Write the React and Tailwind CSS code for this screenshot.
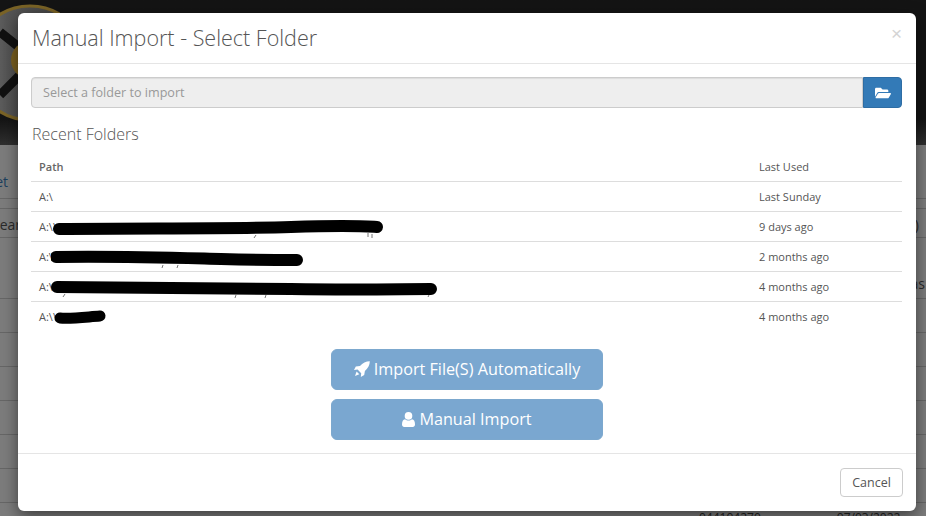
import React from 'react';
import { FaFolderOpen } from 'react-icons/fa';

// scribbled-out paths, coordinates relative to the row's svg
const rows = [
  { when: 'Last Sunday', path: 'A:\\' },
  { when: '9 days ago', path: 'A:\\\\', w: 340, d: 'M8 12 C 90 11, 180 12, 240 10 S 310 9, 326 10', stroke: 12, marks: 'M205 18 L203 21 M317 16 L317 20 M321 17 L321 21' },
  { when: '2 months ago', path: 'A:\\', w: 260, d: 'M5 10 C 70 9, 130 11, 170 12 S 230 13, 246 13', stroke: 12, marks: 'M112 18 L111 21 M127 18 L126 21' },
  { when: '4 months ago', path: 'A:\\', w: 395, d: 'M6 10 C 90 10, 170 11, 240 12 S 350 12, 380 12', stroke: 12, marks: 'M14 17 L12 20 M185 18 L184 21 M215 18 L214 21 M378 18 L377 20' },
  { when: '4 months ago', path: 'A:\\\\', w: 60, d: 'M9 11 C 20 12, 35 10, 49 9', stroke: 11 },
];

function Scribble({ r }) {
  return (
    <svg width={r.w} height="24" className="absolute left-[20px] top-[5px]">
      {r.marks && <path d={r.marks} fill="none" stroke="#777" strokeWidth="1" />}
      <path d={r.d} fill="none" stroke="#000" strokeWidth={r.stroke} strokeLinecap="round" />
    </svg>
  );
}

function RocketIcon() {
  return (
    <svg width="16" height="16" viewBox="0 0 16 16" fill="currentColor">
      <path d="M15.8 0.2C12 0.3 8.6 1.8 6 5L1.8 5.6L0 9L3.6 8.6L7.2 12.2L6.8 15.9L10.2 14L10.9 9.9C14.1 7.3 15.7 3.9 15.8 0.2Z" />
      <path d="M2.6 10.5L5.3 13.2L1 15Z" />
    </svg>
  );
}

function UserIcon() {
  return (
    <svg width="13" height="15" viewBox="0 0 13 15" fill="currentColor">
      <circle cx="6.5" cy="3.9" r="3.8" />
      <path d="M0 12.5C0 9.5 1 7.5 3 7.3C4 8.2 5.2 8.6 6.5 8.6C7.8 8.6 9 8.2 10 7.3C12 7.5 13 9.5 13 12.5C13 14 12 15 10.8 15H2.2C1 15 0 14 0 12.5Z" />
    </svg>
  );
}

function Backdrop() {
  return (
    <div className="h-[516px] overflow-hidden bg-[#7c7c7c]">
      <div className="relative h-[145px] bg-linear-to-b from-[#141414] via-[#141414] via-[82%] to-[#303030]">
        <svg width="60" height="130" className="absolute left-0 top-0">
          <defs>
            <linearGradient id="disc" x1="0" x2="1" y1="0" y2="0">
              <stop offset="0" stopColor="#787878" />
              <stop offset="0.3" stopColor="#555" />
              <stop offset="1" stopColor="#3a3a3a" />
            </linearGradient>
          </defs>
          <circle cx="30" cy="63" r="57" fill="url(#disc)" stroke="#7a6326" strokeWidth="3" />
          <path d="M0 32L20 48M20 75L0 95" stroke="#111" strokeWidth="9" />
          <circle cx="30" cy="60" r="19" fill="#7a6020" />
        </svg>
      </div>
      <div className="font-['Open_Sans',sans-serif] text-[14px]">
        <div className="h-[54px] border-b border-[#666] pt-[26px] text-[#1d3f5e]">
          <span className="ml-[-28px]">Reset</span>
        </div>
        <div className="h-[10px] border-b border-[#666]" />
        <div className="flex h-[29px] justify-between border-b border-[#666] pt-[5px] text-[#2a2a2a]">
          <span className="ml-[-8px]">Search</span>
          <span className="mr-[7px]">)</span>
        </div>
        <div className="flex h-[61px] items-end justify-end border-b border-[#666] pb-[4px] text-[#2a2a2a]">
          <span className="mr-[1px]">as</span>
        </div>
        <div className="h-[34px] border-b border-[#666]" />
        <div className="h-[34px] border-b border-[#666]" />
        <div className="h-[34px] border-b border-[#666]" />
        <div className="h-[34px] border-b border-[#666]" />
        <div className="h-[34px] border-b border-[#666]" />
        <div className="h-[34px] border-b border-[#666]" />
        <div className="flex h-[34px] gap-[76px] pl-[699px] pt-[6px] text-[12px] text-[#222]">
          <span>044104270</span>
          <span>07/03/2022</span>
        </div>
      </div>
    </div>
  );
}

export default function App() {
  return (
    <div className="relative h-[516px] w-[926px] overflow-hidden font-['Open_Sans',sans-serif] text-[#555]">
      <Backdrop />
      <div className="absolute left-[18px] top-[13px] flex h-[498px] w-[898px] flex-col rounded-md bg-white shadow-[0_5px_15px_rgba(0,0,0,0.5)]">
        <div className="flex h-[51px] items-start justify-between border-b border-[#e5e5e5] px-[14px]">
          <h4 className="pt-[8px] text-[21.5px] font-light leading-[33px] text-[#555]">Manual Import - Select Folder</h4>
          <span className="pt-[11px] font-['Liberation_Sans',sans-serif] text-[19px] leading-[20px] text-[#d4d4d4]">×</span>
        </div>
        <div className="flex flex-1 flex-col px-[13px] pt-[13px]">
          <div className="flex h-[31px] w-[871px]">
            <div className="flex flex-1 items-center rounded-l-[4px] border border-[#ccc] bg-[#eeeeee] px-[11px] pt-[1px] text-[12.6px] text-[#999] shadow-[inset_0_1px_1px_rgba(0,0,0,0.075)]">
              Select a folder to import
            </div>
            <button className="flex w-[39px] items-center justify-center rounded-r-[4px] border border-[#2e6da4] bg-[#337ab7] text-white">
              <FaFolderOpen size={16} />
            </button>
          </div>
          <div className="ml-[1px] mt-[14px] text-[16px] font-light leading-[24px] text-[#555]">Recent Folders</div>
          <table className="mt-[6px] w-[871px] table-fixed border-collapse text-[11px] text-[#555]">
            <thead>
              <tr className="h-[29px] border-b border-[#ddd]">
                <th className="px-[8px] pt-[2px] text-left font-semibold text-[#666]">Path</th>
                <th className="w-[143px] pt-[2px] text-left font-normal">Last Used</th>
              </tr>
            </thead>
            <tbody>
              {rows.map((r, i) => (
                <tr key={i} className={i < rows.length - 1 ? 'h-[30px] border-b border-[#ddd]' : 'h-[30px]'}>
                  <td className="relative px-[8px] pt-[2px]">
                    {r.path}
                    {r.d && <Scribble r={r} />}
                  </td>
                  <td className="pt-[2px]">{r.when}</td>
                </tr>
              ))}
            </tbody>
          </table>
          <div className="mt-[18px] flex flex-col items-center gap-[9px]">
            <button className="flex h-[41px] w-[272px] items-center justify-center gap-[4px] rounded-[6px] border border-[#7ca8ce] bg-[#7aa7d0] pb-[1px] text-[16.2px] text-white">
              <RocketIcon /> Import File(S) Automatically
            </button>
            <button className="flex h-[41px] w-[272px] items-center justify-center gap-[4px] rounded-[6px] border border-[#7ca8ce] bg-[#7aa7d0] pb-[1px] text-[16.2px] text-white">
              <UserIcon /> Manual Import
            </button>
          </div>
        </div>
        <div className="flex h-[58px] items-start justify-end border-t border-[#e5e5e5] pr-[13px] pt-[14px]">
          <button className="h-[29px] w-[63px] rounded-[4px] border border-[#ccc] bg-white pt-[1px] text-[12.5px] text-[#555]">Cancel</button>
        </div>
      </div>
    </div>
  );
}
